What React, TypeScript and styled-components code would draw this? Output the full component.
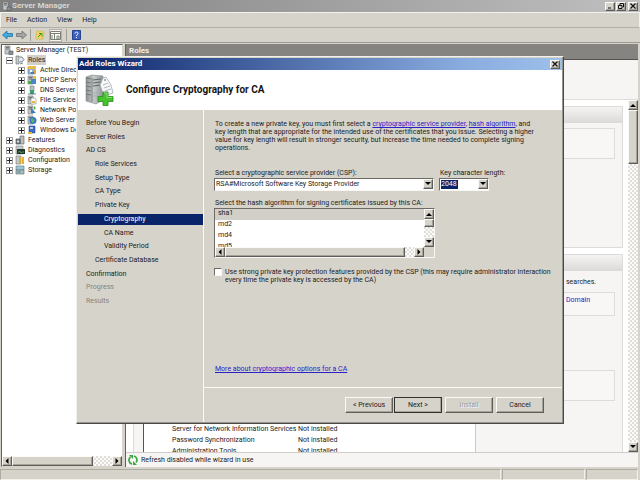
import React from "react";
import styled, { createGlobalStyle, css } from "styled-components";

const FACE = "#d6d3cb";
const NAVY = "#0a246a";

const GlobalStyle = createGlobalStyle`
  *, *::before, *::after { box-sizing: border-box; }
  body { margin: 0; background: ${FACE}; }
  body, button, select, input {
    font-family: Roboto, "Open Sans", sans-serif;
    font-size: 7px;
    line-height: 10px;
    color: #1c1c1c;
  }
  h1, h2, p, ul { margin: 0; padding: 0; font-size: inherit; }
  ul { list-style: none; }
`;

const raised = css`
  border: 1px solid;
  border-color: #fbfaf7 #5f5d59 #5f5d59 #fbfaf7;
  box-shadow: inset -1px -1px 0 #a5a29a;
`;
const sunken = css`
  border: 1px solid;
  border-color: #6d6b67 #f8f7f4 #f8f7f4 #6d6b67;
`;
const checker = css`
  background: repeating-conic-gradient(#e0deda 0 25%, #fbfbfa 0 50%) 0 0 / 4px 4px;
`;

/* Window frame */
const Window = styled.div`
  position: relative;
  display: flex;
  flex-direction: column;
  height: 100vh;
  min-height: 480px;
  overflow: hidden;
  background: ${FACE};
`;
const TitleBar = styled.header`
  display: flex;
  align-items: center;
  height: 12px;
  flex: none;
  padding: 0 2px;
  background: linear-gradient(90deg, #7f7f7f, #bfbfbf);
  color: #d8d5cf;
`;
const AppTitle = styled.h1`
  flex: 1;
  font-size: 8px;
  line-height: 12px;
  font-weight: 700;
`;
const Caption = styled.div`
  display: flex;
  gap: 1px;
`;
const CaptionButton = styled.button<{ $apart?: boolean }>`
  ${raised}
  display: grid;
  place-items: center;
  width: 10px;
  height: 9px;
  padding: 0;
  margin-left: ${(p) => (p.$apart ? 1 : 0)}px;
  background: ${FACE};
`;
const MenuBar = styled.nav`
  display: flex;
  align-items: center;
  gap: 10px;
  height: 16px;
  flex: none;
  padding: 0 5px;
  border: 1px solid #f3f1ec;
  border-bottom-color: #b3b0a9;
`;
const MenuItem = styled.button`
  border: 0;
  padding: 0;
  background: none;
`;
const ToolBar = styled.div`
  display: flex;
  align-items: center;
  height: 15px;
  flex: none;
  padding: 0 2px;
  gap: 4px;
  border-bottom: 1px solid #9b9992;
`;
const ToolButton = styled.button<{ $pressed?: boolean }>`
  display: grid;
  place-items: center;
  width: ${(p) => (p.$pressed ? 13 : 10)}px;
  height: 13px;
  padding: 0;
  border: ${(p) => (p.$pressed ? "1px solid #b5b2aa" : "0")};
  background: ${(p) => (p.$pressed ? "#f4f2ee" : "none")};
`;
const ToolSeparator = styled.span`
  width: 1px;
  height: 12px;
  background: #a19e97;
`;
const Workspace = styled.main`
  display: grid;
  grid-template-columns: 122px minmax(0, 1fr);
  gap: 2px;
  flex: 1;
  min-height: 0;
  padding: 1px 2px 0 1px;
`;
const StatusBar = styled.footer`
  display: grid;
  grid-template-columns: 1fr 83px 52px;
  gap: 1px;
  height: 13px;
  flex: none;
  padding: 2px 2px 0 0;
`;
const StatusCell = styled.span`
  border: 1px solid;
  border-color: #aeaba3 #f2f0eb #f2f0eb #aeaba3;
`;

/* Console tree */
const TreePane = styled.aside`
  display: flex;
  flex-direction: column;
  min-width: 0;
  border: 1px solid;
  border-color: #62605c #d6d3cb #d6d3cb #62605c;
  background: #fff;
`;
const Tree = styled.ul`
  flex: 1;
  overflow: hidden;
`;
const TreeRow = styled.li<{ $level: number }>`
  display: flex;
  align-items: center;
  gap: ${(p) => (p.$level ? 2 : 1)}px;
  height: 10px;
  padding-left: ${(p) => [2, 4, 16][p.$level]}px;
  white-space: nowrap;
`;
const Expander = styled.button`
  display: grid;
  place-items: center;
  width: 7px;
  height: 7px;
  flex: none;
  padding: 0;
  border: 1px solid #9c9c9c;
  background: #fff;
`;
const TreeLabel = styled.span<{ $selected?: boolean }>`
  padding: 0 1px;
  background: ${(p) => (p.$selected ? "#d2cfc8" : "none")};
`;

/* Scroll bars */
const ScrollBar = styled.div<{ $vertical?: boolean }>`
  ${checker}
  display: flex;
  flex: none;
  flex-direction: ${(p) => (p.$vertical ? "column" : "row")};
  ${(p) => (p.$vertical ? "width: 10px;" : "height: 10px;")}
`;
const ScrollArrow = styled.button`
  ${raised}
  display: grid;
  place-items: center;
  width: 10px;
  height: 10px;
  flex: none;
  padding: 0;
  background: ${FACE};
`;
const ScrollThumb = styled.div<{ $size: string }>`
  ${raised}
  flex: 0 0 ${(p) => p.$size};
  background: ${FACE};
`;
const ScrollSpace = styled.div`
  flex: 1;
`;

/* Roles pane */
const RolesPane = styled.section`
  display: flex;
  flex-direction: column;
  min-width: 0;
  min-height: 0;
  border-left: 1px solid #62605c;
  background: #f6f5f4;
`;
const PaneTitle = styled.h2`
  flex: none;
  height: 16px;
  padding-left: 3px;
  font-size: 8px;
  line-height: 14px;
  font-weight: 700;
  color: #f1efeb;
  background: #858481;
  border-bottom: 1px solid #55534f;
`;
const PaneIntro = styled.div`
  flex: none;
  height: 40px;
  border-bottom: 1px solid #dddcda;
`;
const PaneScroll = styled.div`
  display: flex;
  flex: 1;
  min-height: 0;
`;
const Cards = styled.div`
  display: flex;
  flex-direction: column;
  gap: 6px;
  flex: 1;
  min-width: 0;
  overflow: hidden;
  padding: 6px 5px 0 7px;
  background: #fff;
`;
const Card = styled.section<{ $tall?: boolean }>`
  flex: none;
  height: ${(p) => (p.$tall ? 240 : 142)}px;
  border: 1px solid #dcdbd9;
  background: #f6f5f4;
`;
const CardHeader = styled.div`
  height: 16px;
  background: linear-gradient(#f4f3f2, #dbdad8);
`;
const CardBody = styled.div`
  display: grid;
  grid-template-columns: minmax(0, 1fr) 146px;
  padding-left: 9px;
  height: calc(100% - 16px);
`;
const ServicePane = styled.div`
  display: flex;
  flex-direction: column;
  justify-content: flex-start;
  padding: 153px 0 0 28px;
  border-left: 1px solid #55534f;
  border-right: 1px solid #c9c8c5;
  background: #fff;
`;
const ServiceTable = styled.table`
  border-collapse: collapse;
  line-height: 11px;
  td { padding: 0; white-space: nowrap; }
  td:first-child { width: 126px; }
`;
const SidePane = styled.div<{ $first?: boolean }>`
  display: flex;
  flex-direction: column;
  padding: ${(p) => (p.$first ? "5px" : "6px")} 7px 0 0;
  grid-column: 2;
`;
const SideText = styled.p`
  padding-left: 90px;
`;
const SideBox = styled.div<{ $size: "small" | "medium"; $gap: number }>`
  flex: none;
  height: ${(p) => (p.$size === "small" ? 24 : 31)}px;
  margin-top: ${(p) => p.$gap}px;
  padding: 2px 0 0 89px;
  border: 1px solid #dddcda;
  background: #f8f7f6;
  white-space: nowrap;
  a { color: #2a22c8; text-decoration: none; }
`;
const RefreshBar = styled.div`
  display: flex;
  align-items: center;
  gap: 3px;
  height: 15px;
  flex: none;
  padding-left: 2px;
  border-top: 1px solid #cfceca;
`;

/* Wizard */
const Wizard = styled.section`
  position: absolute;
  top: 56px;
  left: 76px;
  width: 488px;
  border: 1px solid;
  border-color: #f2f0ea #4b4a47 #4b4a47 #f2f0ea;
  box-shadow: inset -1px -1px 0 #96948e;
  padding: 1px;
  background: ${FACE};
`;
const WizardTitle = styled.header`
  display: flex;
  align-items: center;
  justify-content: space-between;
  height: 12px;
  padding: 0 2px 0 1px;
  font-size: 8px;
  font-weight: 700;
  color: #fff;
  background: linear-gradient(90deg, ${NAVY}, #8aade0 80%, #9dbfea);
`;
const WizardBanner = styled.div`
  display: flex;
  align-items: center;
  gap: 11px;
  height: 40px;
  padding-left: 7px;
  background: #fff;
`;
const WizardHeading = styled.h2`
  font-size: 10px;
  font-weight: 700;
  color: #151515;
`;
const WizardBody = styled.div`
  display: grid;
  grid-template-columns: 126px minmax(0, 1fr);
`;
const Steps = styled.ul`
  display: flex;
  flex-direction: column;
  justify-content: space-between;
  height: 189px;
  margin-top: 8px;
`;
const StepColumn = styled.nav`
  border-right: 1px solid #fbfaf7;
`;
const Step = styled.li<{ $level: number; $state?: "current" | "off" }>`
  height: 11px;
  line-height: 11px;
  padding-left: ${(p) => 8 + p.$level * 9}px;
  color: ${(p) => (p.$state === "current" ? "#fff" : p.$state === "off" ? "#85837e" : "#1c1c1c")};
  background: ${(p) => (p.$state === "current" ? NAVY : "none")};
`;
const Page = styled.div`
  display: flex;
  flex-direction: column;
  height: 277px;
  padding: 10px 17px 0 10px;
`;
const Intro = styled.p`
  line-height: 8px;
  padding-left: 1px;
  white-space: nowrap;
`;
const Link = styled.a`
  color: #2a22c8;
  text-decoration: underline;
`;
const Fields = styled.div`
  display: grid;
  grid-template-columns: 220px 50px;
  column-gap: 5px;
  margin-top: 17px;
`;
const Label = styled.label`
  display: block;
  line-height: 9px;
  padding-left: 1px;
  white-space: nowrap;
`;
const Combo = styled.div`
  ${sunken}
  display: flex;
  height: 13px;
  background: #fff;
`;
const ComboSelect = styled.select<{ $active?: boolean }>`
  appearance: none;
  flex: 1;
  min-width: 0;
  height: 9px;
  margin: 1px;
  padding: 0;
  border: 0;
  border-radius: 0;
  outline: 0;
  line-height: 9px;
  color: ${(p) => (p.$active ? "#fff" : "#1c1c1c")};
  background: ${(p) => (p.$active ? `linear-gradient(${NAVY}, ${NAVY}) 0 0 / 17px 100% no-repeat` : "#fff")};
`;
const ListLabel = styled(Label)`
  margin-top: 8px;
`;
const ListFrame = styled.div`
  ${sunken}
  display: grid;
  grid-template-columns: minmax(0, 1fr) 10px;
  grid-template-rows: 38px 10px;
  width: 221px;
`;
const HashList = styled.select`
  height: 38px;
  border: 0;
  border-radius: 0;
  padding: 0;
  outline: 0;
  background: #fff;
  scrollbar-width: none;
  &::-webkit-scrollbar { display: none; }
  option {
    height: 11px;
    min-height: 0;
    line-height: 11px;
    padding: 0 3px;
    font-size: 7px;
    color: #1c1c1c;
  }
  option:checked {
    color: #1c1c1c;
    background: linear-gradient(#d2cfc8, #d2cfc8);
  }
`;
const CheckRow = styled.div`
  display: flex;
  gap: 3px;
  margin-top: 10px;
  label { line-height: 8px; white-space: nowrap; }
`;
const CheckBox = styled.input`
  ${sunken}
  appearance: none;
  width: 8px;
  height: 8px;
  flex: none;
  margin: 0;
  background: #fff;
`;
const MoreLink = styled(Link)`
  margin: auto 0 13px 1px;
  align-self: flex-start;
`;
const Buttons = styled.div`
  display: flex;
  justify-content: flex-end;
  gap: 3px;
  height: 35px;
  padding: 9px 18px 0 0;
  border-top: 1px solid #fbfaf7;
`;
const PushButton = styled.button<{ $primary?: boolean }>`
  ${raised}
  width: 48px;
  height: 16px;
  padding: 0;
  line-height: 12px;
  background: ${FACE};
  ${(p) => p.$primary && "outline: 1px solid #33322f; outline-offset: -1px; border-color: #33322f;"}
  &:disabled { color: #a09d96; text-shadow: 1px 1px 0 #f8f6f2; }
`;
const ButtonPair = styled.div`
  display: flex;
  gap: 1px;
`;

/* Drawings */
const Triangle = ({ dir }: { dir: "up" | "down" | "left" | "right" }) => {
  const d = {
    up: "M0 5h6L3 2z",
    down: "M0 1h6L3 4z",
    left: "M4.500 0v6L1.500 3z",
    right: "M1.500 0v6L4.500 3z",
  }[dir];
  return (
    <svg width="6" height="6" viewBox="0 0 6 6" aria-hidden="true">
      <path d={d} fill="#000" />
    </svg>
  );
};

const Cross = () => (
  <svg width="6" height="6" viewBox="0 0 6 6" aria-hidden="true">
    <path d="M.5 .5l5 5M5.500 .5l-5 5" stroke="#111" strokeWidth="1.200" />
  </svg>
);

const Tower = () => (
  <>
    <path d="M1 1h5v8H1z" fill="#c3c6c6" stroke="#6d7272" strokeWidth=".6" />
    <path d="M2 2.500h3M2 4h3" stroke="#535858" strokeWidth=".8" />
  </>
);

type IconKind =
  | "server" | "roles" | "directory" | "dhcp" | "dns" | "file" | "network"
  | "web" | "deploy" | "features" | "diagnostics" | "configuration" | "storage";

const iconArt: Record<IconKind, React.ReactNode> = {
  server: (<><Tower /><path d="M5 6h4v3.500H5z" fill="#8b9292" stroke="#4d5454" strokeWidth=".6" /></>),
  roles: (<><path d="M1 1h3v8H1z" fill="#c5cccc" stroke="#5f6868" strokeWidth=".6" /><path d="M4 2h3l2 2.500L7 7H4M5 9l3-1" fill="#e2e8ea" stroke="#5f7076" strokeWidth=".8" /></>),
  directory: (<><path d="M1 2h7v7H1z" fill="#8fb2da" stroke="#567ba8" strokeWidth=".6" /><path d="M1 1h8v3H1z" fill="#eabb45" /><path d="M3 5h2v2H3z" fill="#fff" /><path d="M6 5h3v4H6z" fill="#e3a63a" /><path d="M4 7h3v2H4z" fill="#4a79c4" /></>),
  dhcp: (<><Tower /><path d="M4 4h5v5H4z" fill="#4b86cb" /><path d="M1 6h3v3H1z" fill="#4faa49" /><path d="M6 1h3v3H6z" fill="#e5bd43" /></>),
  dns: (<><path d="M3 1h4v5H3z" fill="#b9c3c3" stroke="#6b7575" strokeWidth=".6" /><circle cx="5" cy="7" r="2.300" fill="#35a466" /><path d="M1 9h8" stroke="#446" strokeWidth=".7" /></>),
  file: (<><Tower /><path d="M4 3h4l1 1v5H4z" fill="#fff" stroke="#7c8488" strokeWidth=".6" /><path d="M5 6h3v2H5z" fill="#e0b545" /></>),
  network: (<><Tower /><path d="M4 3l5 5H4z" fill="#3d7cb6" /><path d="M7 1l2 2-2 2z" fill="#55a653" /></>),
  web: (<><Tower /><circle cx="6" cy="5.500" r="3.500" fill="#3579c8" /><path d="M4 4c2-2 2 1 3 1s0 3-1 3-1-2-2-2z" fill="#55b756" /></>),
  deploy: (<><path d="M2 1h6v7H2z" fill="#3d69c2" stroke="#294d9c" strokeWidth=".6" /><path d="M3 2h3v2H3z" fill="#b7d2f5" /><path d="M1 7h4v2H1z" fill="#e7ba35" /></>),
  features: (<><path d="M5 1h4v8H5z" fill="#b8bebe" stroke="#5b6363" strokeWidth=".6" /><path d="M1 4h4v5H1z" fill="#7b8484" stroke="#3b4242" strokeWidth=".6" /><circle cx="3" cy="6.500" r="1" fill="#eef" /></>),
  diagnostics: (<><path d="M1 1h7v8H1z" fill="#c5caca" stroke="#7d8585" strokeWidth=".6" /><path d="M2 4h8v5H2z" fill="#26352b" /><path d="M3 7h1l1-1 1 2 1-1h2" stroke="#67d36b" strokeWidth=".6" fill="none" /></>),
  configuration: (<><path d="M1 1h5v8H1z" fill="#c3c8c8" stroke="#6b7373" strokeWidth=".6" /><path d="M5 2v7M8 2v7" stroke="#e0ac25" strokeWidth="1.800" /></>),
  storage: (<><path d="M1 1h8v4H1z" fill="#9ec6d6" stroke="#4f7886" strokeWidth=".6" /><path d="M1 5h8v4H1z" fill="#b4bdbd" stroke="#566" strokeWidth=".6" /><path d="M2 7h4" stroke="#2f9aa7" /></>),
};

const IconFrame = styled.svg`
  width: 10px;
  height: 10px;
  flex: none;
`;

const Icon = ({ kind }: { kind: IconKind }) => (
  <IconFrame viewBox="0 0 10 10" aria-hidden="true">
    {iconArt[kind]}
  </IconFrame>
);

const WizardIcon = () => (
  <svg width="30" height="32" viewBox="0 0 30 32" aria-hidden="true">
    <defs>
      <linearGradient id="case" x1="0" x2="1">
        <stop offset="0" stopColor="#8d9292" />
        <stop offset=".45" stopColor="#c6caca" />
        <stop offset="1" stopColor="#8f9595" />
      </linearGradient>
    </defs>
    <path d="M1 3L7 1L18 2V26L11 30L1 27z" fill="url(#case)" stroke="#868c8c" strokeWidth=".6" />
    <path d="M7 4V28" stroke="#6f7575" strokeWidth=".8" />
    <path d="M1 4l5 1M1 8l5 1M1 12l5 1M1 16l5 1M1 20l5 1" stroke="#6a7171" strokeWidth=".9" />
    <path d="M8 6l8-1M8 9l8-1M8 12l8-1" stroke="#626969" strokeWidth="1.200" />
    <path d="M8 19h6M8 22h5" stroke="#a8aeae" />
    <path d="M18 4l3-1 5 8 2 8-9 3-4-11z" fill="#f5f7f8" stroke="#9aa1a6" strokeWidth=".7" />
    <circle cx="20" cy="6" r="1" fill="#8c9499" />
    <path d="M18 11l5-2M19 14l6-2M20 17l6-2" stroke="#a4acb2" strokeWidth=".8" />
    <path d="M18 18h5v4.500h5v5h-5v4h-5v-4h-5v-5h5z" fill="#45c22d" stroke="#278f18" strokeWidth=".8" />
    <path d="M19 19h3v4.500h5" fill="none" stroke="#9be886" strokeWidth=".8" />
  </svg>
);

const ToolArrow = ({ forward }: { forward?: boolean }) => (
  <svg width="11" height="10" viewBox="0 0 11 10" aria-hidden="true">
    {forward ? (
      <path d="M.5 3.500H6V1l4.500 4L6 9V6.500H.5z" fill="#a5a6a4" stroke="#6e706e" strokeWidth=".8" />
    ) : (
      <path d="M10.500 3.500H5V1L.5 5L5 9V6.500h5.500z" fill="#3fa9e0" stroke="#2176a8" strokeWidth=".8" />
    )}
  </svg>
);

const FolderUp = () => (
  <svg width="10" height="10" viewBox="0 0 10 10" aria-hidden="true">
    <path d="M2 1h5l1 1h1v2l-1 5H1V5z" fill="#edd46a" stroke="#d3b648" strokeWidth=".7" />
    <path d="M3 7l3-3M4 3.500h3v3" stroke="#3d9a2e" fill="none" />
  </svg>
);

const PanelIcon = () => (
  <svg width="11" height="10" viewBox="0 0 11 10" aria-hidden="true">
    <path d="M.5 1.500h10v8H.5z" fill="#fbfbf8" stroke="#7d7c77" />
    <path d="M.5 3.500h10M4.500 4v5" stroke="#7d7c77" />
    <path d="M2 5v4M7 6h2v3H7z" stroke="#6e8c76" fill="none" />
  </svg>
);

const HelpIcon = () => (
  <svg width="9" height="10" viewBox="0 0 9 10" aria-hidden="true">
    <path d="M.5 .5h8v9h-8z" fill="#3c62c4" stroke="#27418c" />
    <path d="M3 3.500C3 1.500 6 1.500 6 3.500C6 4.500 4.500 4.500 4.500 6M4.500 7v1.200" stroke="#fff" fill="none" />
  </svg>
);

const RefreshIcon = () => (
  <svg width="10" height="10" viewBox="0 0 10 10" aria-hidden="true">
    <path d="M4 9A4 4 0 0 1 2.500 2M6 1A4 4 0 0 1 8 7.500" fill="none" stroke="#3aa83c" strokeWidth="1.700" />
    <path d="M1 0h4v4zM9 10H5V6z" fill="#3aa83c" />
  </svg>
);

const tree: { label: string; icon: IconKind; level: number; open?: boolean }[] = [
  { label: "Server Manager (TEST)", icon: "server", level: 0 },
  { label: "Roles", icon: "roles", level: 1, open: true },
  { label: "Active Direc", icon: "directory", level: 2 },
  { label: "DHCP Server", icon: "dhcp", level: 2 },
  { label: "DNS Server", icon: "dns", level: 2 },
  { label: "File Services", icon: "file", level: 2 },
  { label: "Network Poli", icon: "network", level: 2 },
  { label: "Web Server", icon: "web", level: 2 },
  { label: "Windows De", icon: "deploy", level: 2 },
  { label: "Features", icon: "features", level: 1 },
  { label: "Diagnostics", icon: "diagnostics", level: 1 },
  { label: "Configuration", icon: "configuration", level: 1 },
  { label: "Storage", icon: "storage", level: 1 },
];

const steps: { label: string; level: number; state?: "current" | "off" }[] = [
  { label: "Before You Begin", level: 0 },
  { label: "Server Roles", level: 0 },
  { label: "AD CS", level: 0 },
  { label: "Role Services", level: 1 },
  { label: "Setup Type", level: 1 },
  { label: "CA Type", level: 1 },
  { label: "Private Key", level: 1 },
  { label: "Cryptography", level: 2, state: "current" },
  { label: "CA Name", level: 2 },
  { label: "Validity Period", level: 2 },
  { label: "Certificate Database", level: 1 },
  { label: "Confirmation", level: 0 },
  { label: "Progress", level: 0, state: "off" },
  { label: "Results", level: 0, state: "off" },
];

const services = [
  "Server for Network Information Services",
  "Password Synchronization",
  "Administration Tools",
];

const ConsoleTree = () => (
  <TreePane>
    <Tree>
      {tree.map((n) => (
        <TreeRow key={n.label} $level={n.level}>
          {n.level > 0 && (
            <Expander aria-label={`Toggle ${n.label}`}>
              <svg width="5" height="5" viewBox="0 0 5 5" aria-hidden="true">
                <path d={n.open ? "M0 2.500h5" : "M0 2.500h5M2.500 0v5"} stroke="#222" />
              </svg>
            </Expander>
          )}
          <Icon kind={n.icon} />
          <TreeLabel $selected={n.open}>{n.label}</TreeLabel>
        </TreeRow>
      ))}
    </Tree>
    <ScrollBar>
      <ScrollArrow aria-label="Scroll left"><Triangle dir="left" /></ScrollArrow>
      <ScrollThumb $size="81px" />
      <ScrollSpace />
      <ScrollArrow aria-label="Scroll right"><Triangle dir="right" /></ScrollArrow>
    </ScrollBar>
  </TreePane>
);

const Roles = () => (
  <RolesPane>
    <PaneTitle>Roles</PaneTitle>
    <PaneIntro />
    <PaneScroll>
      <Cards>
        <Card>
          <CardHeader />
          <CardBody>
            <SidePane $first>
              <SideBox $size="medium" $gap={0} />
            </SidePane>
          </CardBody>
        </Card>
        <Card $tall>
          <CardHeader />
          <CardBody>
            <ServicePane>
              <ServiceTable>
                <tbody>
                  {services.map((s) => (
                    <tr key={s}>
                      <td>{s}</td>
                      <td>Not installed</td>
                    </tr>
                  ))}
                </tbody>
              </ServiceTable>
            </ServicePane>
            <SidePane>
              <SideText>searches.</SideText>
              <SideBox $size="small" $gap={5}>
                <a href="#domain">Domain</a>
              </SideBox>
              <SideBox $size="medium" $gap={54} />
            </SidePane>
          </CardBody>
        </Card>
      </Cards>
      <ScrollBar $vertical>
        <ScrollArrow aria-label="Scroll up"><Triangle dir="up" /></ScrollArrow>
        <ScrollThumb $size="54px" />
        <ScrollSpace />
        <ScrollArrow aria-label="Scroll down"><Triangle dir="down" /></ScrollArrow>
      </ScrollBar>
    </PaneScroll>
    <RefreshBar>
      <RefreshIcon />
      <span>Refresh disabled while wizard in use</span>
    </RefreshBar>
  </RolesPane>
);

const AddRolesWizard = () => (
  <Wizard role="dialog" aria-labelledby="wizard-heading">
    <WizardTitle>
      <span>Add Roles Wizard</span>
      <CaptionButton aria-label="Close wizard"><Cross /></CaptionButton>
    </WizardTitle>
    <WizardBanner>
      <WizardIcon />
      <WizardHeading id="wizard-heading">Configure Cryptography for CA</WizardHeading>
    </WizardBanner>
    <WizardBody>
      <StepColumn>
        <Steps>
          {steps.map((s) => (
            <Step key={s.label} $level={s.level} $state={s.state}>{s.label}</Step>
          ))}
        </Steps>
      </StepColumn>
      <div>
        <Page>
          <Intro>
            To create a new private key, you must first select a{" "}
            <Link href="#csp">cryptographic service provider</Link>, <Link href="#hash">hash algorithm</Link>, and
            <br />
            key length that are appropriate for the intended use of the certificates that you issue. Selecting a higher
            <br />
            value for key length will result in stronger security, but increase the time needed to complete signing
            <br />
            operations.
          </Intro>
          <Fields>
            <div>
              <Label htmlFor="csp-select">Select a cryptographic service provider (CSP):</Label>
              <Combo>
                <ComboSelect id="csp-select">
                  <option>RSA#Microsoft Software Key Storage Provider</option>
                </ComboSelect>
                <ScrollArrow as="span"><Triangle dir="down" /></ScrollArrow>
              </Combo>
            </div>
            <div>
              <Label htmlFor="key-length">Key character length:</Label>
              <Combo>
                <ComboSelect id="key-length" $active>
                  <option>2048</option>
                </ComboSelect>
                <ScrollArrow as="span"><Triangle dir="down" /></ScrollArrow>
              </Combo>
            </div>
          </Fields>
          <ListLabel htmlFor="hash-list">Select the hash algorithm for signing certificates issued by this CA:</ListLabel>
          <ListFrame>
            <HashList id="hash-list" size={4} defaultValue="sha1">
              <option>sha1</option>
              <option>md2</option>
              <option>md4</option>
              <option>md5</option>
            </HashList>
            <ScrollBar $vertical>
              <ScrollArrow aria-label="Scroll list up"><Triangle dir="up" /></ScrollArrow>
              <ScrollThumb $size="8px" />
              <ScrollSpace />
              <ScrollArrow aria-label="Scroll list down"><Triangle dir="down" /></ScrollArrow>
            </ScrollBar>
            <ScrollBar>
              <ScrollArrow aria-label="Scroll list left"><Triangle dir="left" /></ScrollArrow>
              <ScrollThumb $size="180px" />
              <ScrollSpace />
              <ScrollArrow aria-label="Scroll list right"><Triangle dir="right" /></ScrollArrow>
            </ScrollBar>
          </ListFrame>
          <CheckRow>
            <CheckBox type="checkbox" id="strong-key" />
            <label htmlFor="strong-key">
              Use strong private key protection features provided by the CSP (this may require administrator interaction
              <br />
              every time the private key is accessed by the CA)
            </label>
          </CheckRow>
          <MoreLink href="#more">More about cryptographic options for a CA</MoreLink>
        </Page>
        <Buttons>
          <ButtonPair>
            <PushButton>&lt; Previous</PushButton>
            <PushButton $primary>Next &gt;</PushButton>
          </ButtonPair>
          <PushButton disabled>Install</PushButton>
          <PushButton>Cancel</PushButton>
        </Buttons>
      </div>
    </WizardBody>
  </Wizard>
);

export default function App() {
  return (
    <>
      <GlobalStyle />
      <Window>
        <TitleBar>
          <Icon kind="server" />
          <AppTitle>Server Manager</AppTitle>
          <Caption>
            <CaptionButton aria-label="Minimize">
              <svg width="6" height="6" viewBox="0 0 6 6"><path d="M1 5h3" stroke="#111" /></svg>
            </CaptionButton>
            <CaptionButton aria-label="Restore">
              <svg width="6" height="6" viewBox="0 0 6 6">
                <path d="M2 2V.5h3.500V4H4.500M.5 2.500H4V5.500H.5z" fill="none" stroke="#111" />
              </svg>
            </CaptionButton>
            <CaptionButton $apart aria-label="Close"><Cross /></CaptionButton>
          </Caption>
        </TitleBar>
        <MenuBar>
          {["File", "Action", "View", "Help"].map((m) => (
            <MenuItem key={m}>{m}</MenuItem>
          ))}
        </MenuBar>
        <ToolBar>
          <ToolButton aria-label="Back"><ToolArrow /></ToolButton>
          <ToolButton aria-label="Forward"><ToolArrow forward /></ToolButton>
          <ToolSeparator />
          <ToolButton aria-label="Up one level"><FolderUp /></ToolButton>
          <ToolButton $pressed aria-label="Show console tree"><PanelIcon /></ToolButton>
          <ToolSeparator />
          <ToolButton aria-label="Help"><HelpIcon /></ToolButton>
        </ToolBar>
        <Workspace>
          <ConsoleTree />
          <Roles />
        </Workspace>
        <StatusBar>
          <StatusCell />
          <StatusCell />
          <StatusCell />
        </StatusBar>
        <AddRolesWizard />
      </Window>
    </>
  );
}
